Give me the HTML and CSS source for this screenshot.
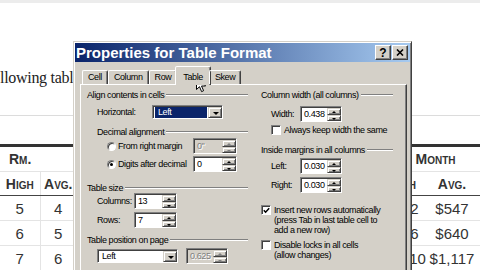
FILE: index.html
```html
<!DOCTYPE html>
<html lang="en">
<head>
    <meta charset="UTF-8">
    <meta name="viewport" content="width=device-width, initial-scale=1.0">
    <title>Properties for Table Format</title>
    <link rel="stylesheet" href="styles.css">
</head>
<body>
    <div class="page">
        <p class="intro">llowing table</p>
        <hr class="rule">
        <table class="rates">
            <colgroup>
                <col class="c-high"><col class="c-avg">
                <col class="c-mid"><col class="c-mid"><col class="c-mid"><col class="c-mid">
                <col class="c-high2"><col class="c-avg2">
            </colgroup>
            <thead>
                <tr class="group-row">
                    <th colspan="2" class="grp-left">Rm.</th>
                    <th colspan="4"></th>
                    <th colspan="2" class="grp-right">Per Month</th>
                </tr>
                <tr class="head-row">
                    <th class="first">High</th><th>Avg.</th>
                    <th></th><th></th><th></th><th></th>
                    <th>High</th><th>Avg.</th>
                </tr>
            </thead>
            <tbody>
                <tr><td class="first">5</td><td>4</td><td></td><td></td><td></td><td></td><td>$982</td><td>$547</td></tr>
                <tr><td class="first">6</td><td>5</td><td></td><td></td><td></td><td></td><td>$996</td><td>$640</td></tr>
                <tr><td class="first">7</td><td>6</td><td></td><td></td><td></td><td></td><td>$1,210</td><td>$1,117</td></tr>
            </tbody>
        </table>
    </div>

    <div class="dialog">
        <div class="titlebar">
            <span class="title">Properties for Table Format</span>
            <span class="tb-btn">?</span>
            <span class="tb-btn">
                <svg width="8" height="7" viewBox="0 0 8 7"><path d="M1 0.5 L7 6.5 M7 0.5 L1 6.5" stroke="#000" stroke-width="1.6"/></svg>
            </span>
        </div>

        <div class="body">
            <div class="tabs">
                <span class="tab">Cell</span>
                <span class="tab">Column</span>
                <span class="tab">Row</span>
                <span class="tab active">Table</span>
                <span class="tab">Skew</span>
            </div>

            <div class="panel">
                <!-- left column -->
                <div class="col col-left">
                    <div class="group">Align contents in cells</div>
                    <div class="field in1 mt5">
                        <span class="lbl lbl-horiz">Horizontal:</span>
                        <span class="select sel-horiz"><span class="sel-val hl">Left</span><span class="drop"></span></span>
                    </div>

                    <div class="group in1 mt8">Decimal alignment</div>
                    <div class="field in2 mt1">
                        <span class="radio"></span>
                        <span class="lbl lbl-radio">From right margin</span>
                        <span class="spin spin-dec disabled"><span class="spin-val">0"</span><span class="spin-btns"><i class="up"></i><i class="down"></i></span></span>
                    </div>
                    <div class="field in2 mt2">
                        <span class="radio checked"></span>
                        <span class="lbl lbl-radio">Digits after decimal</span>
                        <span class="spin spin-dec"><span class="spin-val">0</span><span class="spin-btns"><i class="up"></i><i class="down"></i></span></span>
                    </div>

                    <div class="group mt11">Table size</div>
                    <div class="field in1">
                        <span class="lbl lbl-size">Columns:</span>
                        <span class="spin spin-size"><span class="spin-val">13</span><span class="spin-btns"><i class="up"></i><i class="down"></i></span></span>
                    </div>
                    <div class="field in1 mt3">
                        <span class="lbl lbl-size">Rows:</span>
                        <span class="spin spin-size"><span class="spin-val">7</span><span class="spin-btns"><i class="up"></i><i class="down"></i></span></span>
                    </div>

                    <div class="group mt7">Table position on page</div>
                    <div class="field in1 mt3">
                        <span class="select sel-pos"><span class="sel-val">Left</span><span class="drop"></span></span>
                        <span class="spin spin-pos disabled"><span class="spin-val">0.625</span><span class="spin-btns"><i class="up"></i><i class="down"></i></span></span>
                    </div>
                </div>

                <!-- right column -->
                <div class="col col-right">
                    <div class="group">Column width (all columns)</div>
                    <div class="field in1 mt6">
                        <span class="lbl lbl-width">Width:</span>
                        <span class="spin spin-width"><span class="spin-val">0.438</span><span class="spin-btns"><i class="up"></i><i class="down"></i></span></span>
                    </div>
                    <div class="check-row in1 mt3">
                        <span class="box"></span>
                        <span>Always keep width the same</span>
                    </div>

                    <div class="group mt10">Inside margins in all columns</div>
                    <div class="field in1 mt3">
                        <span class="lbl lbl-width">Left:</span>
                        <span class="spin spin-width"><span class="spin-val">0.030</span><span class="spin-btns"><i class="up"></i><i class="down"></i></span></span>
                    </div>
                    <div class="field in1 mt3">
                        <span class="lbl lbl-width">Right:</span>
                        <span class="spin spin-width"><span class="spin-val">0.030</span><span class="spin-btns"><i class="up"></i><i class="down"></i></span></span>
                    </div>

                    <div class="check-row mt12">
                        <span class="box">
                            <svg width="7" height="7" viewBox="0 0 7 7"><path d="M0.8 3.2 L2.6 5.2 L6.2 1.2" fill="none" stroke="#000" stroke-width="1.5"/></svg>
                        </span>
                        <span>Insert new rows automatically<br>(press Tab in last table cell to<br>add a new row)</span>
                    </div>
                    <div class="check-row mt5">
                        <span class="box"></span>
                        <span>Disable locks in all cells<br>(allow changes)</span>
                    </div>
                </div>
            </div>
        </div>
    </div>

    <svg class="cursor" width="11" height="17" viewBox="0 0 11 17">
        <path d="M0.5 0.5 V13.5 L3.5 10.7 L5.6 15.6 L7.6 14.7 L5.5 10 H9.6 Z" fill="#fff" stroke="#000"/>
    </svg>
</body>
</html>
```

FILE: styles.css
```css
html, body {
    margin: 0;
    overflow: hidden;
}
body {
    position: relative;
    width: 480px;
    height: 270px;
    background-color: #fff;
}

/* page behind the dialog */
.page {
    border-top: 3px solid #ececec;
}
.intro {
    margin: 66px 0 0;
    font-family: "Liberation Serif", serif;
    font-size: 16px;
    line-height: 18px;
    letter-spacing: -0.3px;
    color: #222;
    white-space: nowrap;
}
.rule {
    margin: 28px 0 0;
    height: 0;
    border: 0;
    border-top: 1px solid #dcdcdc;
}
.rates {
    margin-top: 28px;
    width: 480px;
    table-layout: fixed;
    border-collapse: collapse;
    border-top: 3px solid #333;
    font-family: "Liberation Sans", Arial, sans-serif;
    color: #333;
}
.c-high { width: 40px; }
.c-avg { width: 36px; }
.c-mid { width: 76px; }
.c-high2 { width: 44px; }
.c-avg2 { width: 56px; }
.rates th, .rates td {
    padding: 0;
}
.rates th {
    font-size: 14px;
    font-weight: bold;
    font-variant: small-caps;
}
.group-row th {
    height: 24px;
    text-align: left;
    border-bottom: 1px solid #e4e4e4;
}
.group-row .grp-left {
    padding-left: 9px;
}
.group-row .grp-right {
    text-align: center;
    padding-right: 16px;
}
.head-row th {
    height: 23px;
    text-align: center;
    border-bottom: 1px solid #444;
}
.rates td {
    height: 24px;
    font-size: 15px;
    text-align: center;
    border-bottom: 1px solid #e4e4e4;
}
.rates tbody tr:last-child td {
    border-bottom: 0;
}
.rates .first {
    border-right: 1px solid #e4e4e4;
}

/* dialog window */
.dialog {
    position: absolute;
    left: 73px;
    top: 41px;
    width: 339px;
    height: 240px;
    box-sizing: border-box;
    overflow: hidden;
    padding: 1px;
    background-color: #d4d0c8;
    border: 1px solid;
    border-color: #d4d0c8 #404040 #404040 #d4d0c8;
    box-shadow: inset 1px 1px #fff, inset -1px -1px #808080;
    font-family: "Liberation Sans", Arial, sans-serif;
    font-size: 9px;
    letter-spacing: -0.4px;
    color: #000;
}
.titlebar {
    display: flex;
    align-items: center;
    height: 19px;
    padding: 0 2px 0 1px;
    background: linear-gradient(to right, #0a246a, #a6caf0);
}
.title {
    flex: 1;
    font-size: 15px;
    font-weight: bold;
    line-height: 19px;
    letter-spacing: 0;
    color: #fff;
}
.tb-btn {
    display: flex;
    align-items: center;
    justify-content: center;
    width: 16px;
    height: 15px;
    margin-left: 1px;
    box-sizing: border-box;
    background-color: #d4d0c8;
    border: 1px solid;
    border-color: #fff #404040 #404040 #fff;
    box-shadow: inset -1px -1px #808080;
    font-size: 12px;
    font-weight: bold;
    letter-spacing: 0;
}

.body {
    padding: 0 3px 0 5px;
}
.tabs {
    position: relative;
    z-index: 1;
    display: flex;
    align-items: flex-end;
    height: 18px;
    margin-top: 4px;
    padding-left: 2px;
}
.tab {
    height: 13px;
    padding: 0 5px;
    line-height: 13px;
    border: 1px solid;
    border-bottom: 0;
    border-color: #fff #404040 transparent #fff;
    border-radius: 2px 2px 0 0;
    box-shadow: inset -1px 0 #808080;
}
.tab.active {
    height: 14px;
    margin: 0 -2px -1px;
    padding: 4px 7px 0;
    background-color: #d4d0c8;
}

.panel {
    display: flex;
    gap: 13px;
    height: 200px;
    padding: 5px 0 0 6px;
    border: 1px solid;
    border-color: #fff #404040 #404040 #fff;
    box-shadow: inset -1px -1px #808080;
}
.col-left { width: 161px; }
.col-right { width: 132px; }

.group {
    display: flex;
    align-items: center;
    line-height: 10px;
    white-space: nowrap;
}
.group::after {
    content: "";
    flex: 1;
    margin-left: 2px;
    border-top: 1px solid #808080;
    border-bottom: 1px solid #fff;
}
.field {
    display: flex;
    align-items: center;
    line-height: 11px;
}
.in1 { margin-left: 10px; }
.in2 { margin-left: 20px; }
.mt1 { margin-top: 1px; }
.mt2 { margin-top: 2px; }
.mt3 { margin-top: 3px; }
.mt5 { margin-top: 5px; }
.mt6 { margin-top: 6px; }
.mt7 { margin-top: 7px; }
.mt8 { margin-top: 8px; }
.mt10 { margin-top: 10px; }
.mt11 { margin-top: 11px; }
.mt12 { margin-top: 12px; }

.lbl-horiz { width: 55px; }
.lbl-radio { width: 75px; margin-left: 2px; }
.lbl-size { width: 37px; }
.lbl-width { width: 29px; }

/* sunken controls */
.select, .spin {
    display: flex;
    box-sizing: border-box;
    background-color: #fff;
    border: 1px solid;
    border-color: #808080 #fff #fff #808080;
    box-shadow: inset 1px 1px #404040;
}
.select {
    height: 14px;
    padding: 1px 0 0 1px;
}
.sel-val {
    flex: 1;
    padding-left: 3px;
    line-height: 11px;
}
.sel-val.hl {
    margin: 0 1px 0 1px;
    background-color: #0a246a;
    color: #fff;
}
.drop, .spin-btns i {
    position: relative;
    box-sizing: border-box;
    background-color: #d4d0c8;
    border: 1px solid;
    border-color: #d4d0c8 #404040 #404040 #d4d0c8;
    box-shadow: inset 1px 1px #fff, inset -1px -1px #808080;
}
.drop {
    width: 14px;
}
.drop::after {
    content: "";
    position: absolute;
    left: 4px;
    top: 4px;
    border-left: 3px solid transparent;
    border-right: 3px solid transparent;
    border-top: 3px solid #000;
}
.sel-horiz { width: 71px; }
.sel-pos { width: 81px; }

.spin {
    height: 16px;
    padding: 1px 0 0 1px;
}
.spin-val {
    flex: 1;
    padding-left: 2px;
    line-height: 13px;
}
.spin-btns {
    display: flex;
    flex-direction: column;
    width: 14px;
}
.spin-btns i {
    flex: 1;
}
.spin-btns i::after {
    content: "";
    position: absolute;
    left: 4px;
    top: 2px;
    border-left: 2px solid transparent;
    border-right: 2px solid transparent;
}
.spin-btns .up::after {
    border-bottom: 2px solid #000;
}
.spin-btns .down::after {
    border-top: 2px solid #000;
}
.spin.disabled {
    background-color: #d4d0c8;
    color: #808080;
    text-shadow: 1px 1px #fff;
}
.spin.disabled .spin-btns .up::after {
    border-bottom-color: #808080;
}
.spin.disabled .spin-btns .down::after {
    border-top-color: #808080;
}
.spin-dec { width: 44px; }
.spin-size { width: 43px; }
.spin-width { width: 42px; }
.spin-pos { width: 42px; margin-left: 8px; }

.radio {
    position: relative;
    width: 9px;
    height: 9px;
    box-sizing: border-box;
    border-radius: 50%;
    background-color: #fff;
    border: 1px solid;
    border-color: #808080 #fff #fff #808080;
    box-shadow: inset 1px 1px #404040;
}
.radio.checked::after {
    content: "";
    position: absolute;
    left: 2px;
    top: 2px;
    width: 3px;
    height: 3px;
    border-radius: 50%;
    background-color: #000;
}

.check-row {
    display: flex;
    align-items: flex-start;
    line-height: 10px;
    white-space: nowrap;
}
.box {
    display: flex;
    align-items: center;
    justify-content: center;
    flex: none;
    width: 10px;
    height: 10px;
    margin-right: 3px;
    box-sizing: border-box;
    background-color: #fff;
    border: 1px solid;
    border-color: #808080 #fff #fff #808080;
    box-shadow: inset 1px 1px #404040;
}

.cursor {
    position: absolute;
    left: 196px;
    top: 76px;
}
```
